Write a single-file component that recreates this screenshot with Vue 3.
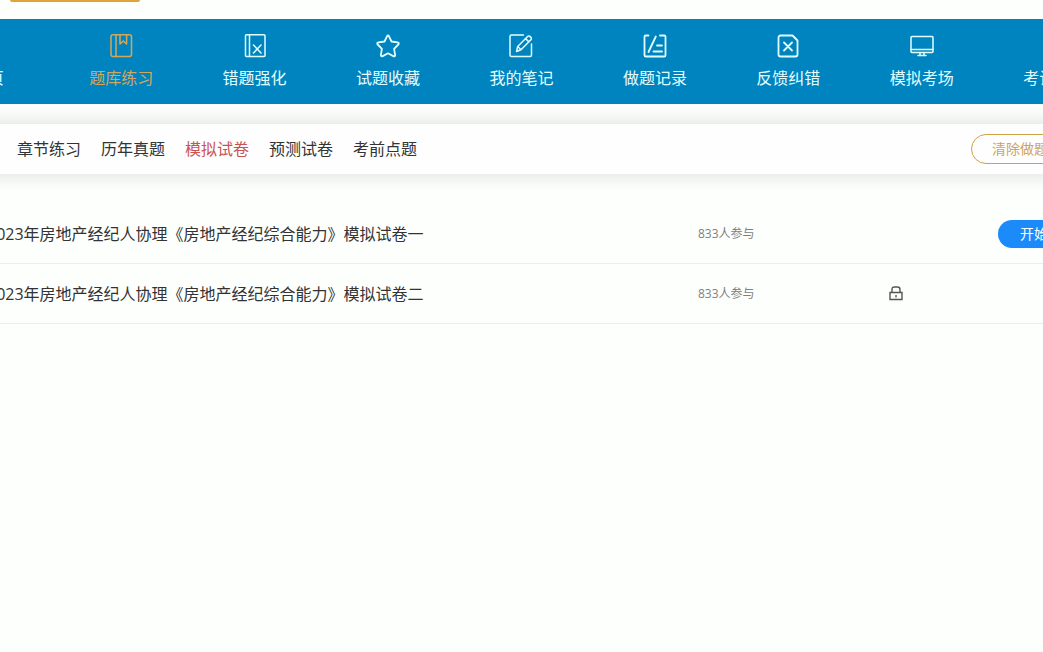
<script setup>
import { ref } from 'vue'

const navItems = [
  { label: '首页', icon: 'home' },
  { label: '题库练习', icon: 'book' },
  { label: '错题强化', icon: 'wrong' },
  { label: '试题收藏', icon: 'star' },
  { label: '我的笔记', icon: 'note' },
  { label: '做题记录', icon: 'record' },
  { label: '反馈纠错', icon: 'feedback' },
  { label: '模拟考场', icon: 'screen' },
  { label: '考试资讯', icon: 'none' },
]
const activeNav = ref('题库练习')

const tabs = ['每日一练', '章节练习', '历年真题', '模拟试卷', '预测试卷', '考前点题']
const activeTab = ref('模拟试卷')

const papers = [
  { title: '2023年房地产经纪人协理《房地产经纪综合能力》模拟试卷一', count: 833, locked: false },
  { title: '2023年房地产经纪人协理《房地产经纪综合能力》模拟试卷二', count: 833, locked: true },
]
</script>

<template>
  <div class="page">
    <div class="top"><div class="top-pill"></div></div>

    <nav class="nav">
      <div class="wide nav-list">
        <a
          v-for="item in navItems"
          :key="item.label"
          href="#"
          class="nav-item"
          :class="{ active: item.label === activeNav }"
          @click.prevent="activeNav = item.label"
        >
          <svg class="nav-icon" viewBox="0 0 24 24" aria-hidden="true">
            <g v-if="item.icon === 'home'">
              <path d="M3 11 12 3l9 8M5 10v11h14V10" />
            </g>
            <g v-else-if="item.icon === 'book'">
              <rect x="2" y="0.8" width="20.5" height="21.7" rx="2" />
              <path d="M7 1v21.500M11 1v9l3.300-3 3.300 3V1" />
            </g>
            <g v-else-if="item.icon === 'wrong'">
              <rect x="2.500" y="0.800" width="19.500" height="21.700" rx="1" />
              <path d="M6.500 1v21.500M10.500 11l7.500 8M18 11l-7.500 8" />
            </g>
            <g v-else-if="item.icon === 'star'" class="bold">
              <path d="M12 1.500c.5 0 .8.4 1 .8l2.500 5.200 6 .9c1.300.2 1.700 1.200.8 2.100l-4.200 4.300 1 6c.2 1.300-.7 1.900-1.800 1.300L12 19.300l-5.300 2.800c-1.100.6-2-.1-1.800-1.300l1-6-4.200-4.300c-.9-.9-.5-1.900.8-2.100l6-.9L11 2.300c.2-.4.5-.8 1-.8z" />
            </g>
            <g v-else-if="item.icon === 'note'">
              <path d="M14.500 1H2.500c-1 0-1.500.5-1.500 1.500V21c0 1 .5 1.500 1.500 1.500H21c1 0 1.500-.5 1.500-1.500V10" />
              <path d="M7.500 17.500l1.200-5L18.600 2.400c.7-.7 1.600-.7 2.300 0l1 1c.7.7.7 1.600 0 2.300L12 15.700zM8.700 12.500l3.300 3.200M16.500 4.500l3.400 3.400" />
            </g>
            <g v-else-if="item.icon === 'record'" class="bold">
              <path d="M5.500 1.500H2.800c-.9 0-1.300.4-1.300 1.300v18.400c0 .9.400 1.300 1.300 1.300h18.400c.9 0 1.300-.4 1.300-1.300V2.800c0-.9-.4-1.300-1.300-1.300H17M12.800 2.500 5.500 18M14 11.500h5M10.500 17.500h8.500" />
            </g>
            <g v-else-if="item.icon === 'feedback'" class="bold">
              <path d="M4.500 1.500h12l5 5V20.500c0 1.200-.8 2-2 2h-15c-1.200 0-2-.8-2-2v-17c0-1.200.8-2 2-2zM8 8.500l8 8M16 8.500l-8 8" />
            </g>
            <g v-else-if="item.icon === 'screen'">
              <rect x="1" y="2.500" width="22" height="16" rx="1" />
              <path d="M1 15.500h22M10 18.500v3M14 18.500v3M8 21.500h8" />
            </g>
          </svg>
          <span>{{ item.label }}</span>
        </a>
      </div>
    </nav>

    <section class="wide tabs">
      <div class="tab-list">
        <button
          v-for="tab in tabs"
          :key="tab"
          type="button"
          class="tab"
          :class="{ active: tab === activeTab }"
          @click="activeTab = tab"
        >{{ tab }}</button>
      </div>
      <button type="button" class="clear">清除做题记录</button>
    </section>

    <main>
      <ul class="wide papers">
        <li v-for="paper in papers" :key="paper.title" class="paper">
          <span class="title">{{ paper.title }}</span>
          <span class="count">{{ paper.count }}人参与</span>
          <span class="state">
            <svg v-if="paper.locked" class="lock" viewBox="0 0 16 16" role="img" aria-label="未解锁">
              <path d="M2 6.500h12v7H2zM4 6.500V3.500c0-1.700.8-2.500 2.500-2.500h3c1.700 0 2.500.8 2.500 2.500v3M8 9v2.500" />
            </svg>
          </span>
          <button v-if="!paper.locked" type="button" class="start">开始做题</button>
        </li>
      </ul>
    </main>
  </div>
</template>

<style>
body {
  margin: 0;
  background: #fdfffd;
}
</style>

<style scoped>
.page {
  min-height: 100vh;
  overflow: hidden;
  background: #fdfffd;
  color: #333;
  font-family: "Open Sans", "Noto Sans CJK SC", sans-serif;
  font-size: 16px;
  line-height: 24px;
}

button {
  margin: 0;
  padding: 0;
  border: 0;
  background: none;
  color: inherit;
  font: inherit;
  white-space: nowrap;
  cursor: pointer;
}

/* Content column that runs past both sides of the window */
.wide {
  margin-left: -79px;
  margin-right: -79px;
}

.top {
  height: 19px;
  padding-left: 10px;
}

.top-pill {
  width: 130px;
  height: 2px;
  border-radius: 0 0 4px 4px;
  background: #e0a23a;
}

.nav {
  background: #0084c0;
}

.nav-list {
  display: flex;
}

.nav-item {
  flex: 1;
  display: flex;
  flex-direction: column;
  align-items: center;
  gap: 8px;
  padding: 15px 0 14px;
  color: #e2ffff;
  text-decoration: none;
}

.nav-item.active {
  color: #d2a75c;
}

.nav-icon {
  width: 24px;
  height: 24px;
  fill: none;
  stroke: currentColor;
  stroke-width: 1.5;
  stroke-linecap: round;
  stroke-linejoin: round;
}

.bold {
  stroke-width: 1.8;
}

.tabs {
  display: flex;
  align-items: center;
  justify-content: space-between;
  margin-top: 20px;
  padding: 10px 25px 10px 12px;
  background: #fdfefd;
  box-shadow: 0 0 20px rgba(0, 0, 0, 0.14);
}

.tab-list {
  display: flex;
  gap: 20px;
}

.tab.active {
  color: #cc5252;
}

.clear {
  height: 30px;
  padding: 0 20px;
  border: 1px solid #cfa248;
  border-radius: 15px;
  color: #cfa35c;
  font-size: 14px;
}

.papers {
  margin-top: 30px;
  margin-bottom: 0;
  padding: 0;
  list-style: none;
}

.paper {
  display: grid;
  grid-template-columns: 711px 190px 1fr auto;
  align-items: center;
  height: 59px;
  padding: 0 24px 0 66px;
  border-bottom: 1px solid #ebeeeb;
}

.title {
  white-space: nowrap;
}

.count {
  color: #808080;
  font-size: 12px;
}

.lock {
  display: block;
  width: 16px;
  height: 16px;
  fill: none;
  stroke: #555;
  stroke-width: 1.4;
}

.start {
  height: 28px;
  padding: 0 22px;
  border-radius: 14px;
  background: #1c8bfa;
  color: #fff;
  font-size: 14px;
}
</style>
